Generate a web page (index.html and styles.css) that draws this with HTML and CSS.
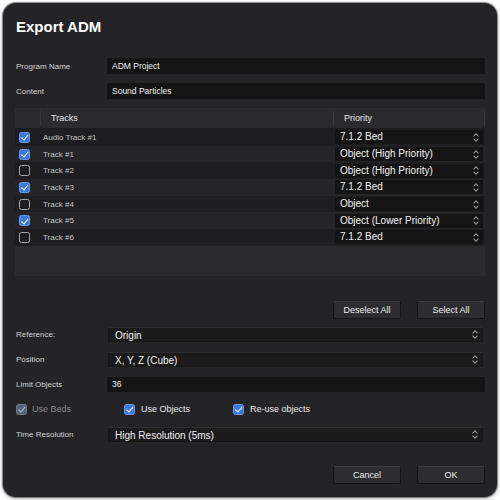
FILE: index.html
```html
<!DOCTYPE html>
<html lang="en">
<head>
<meta charset="UTF-8" />
<meta name="viewport" content="width=device-width, initial-scale=1" />
<title>Export ADM</title>
<link rel="stylesheet" href="styles.css">
</head>
<body>
<div class="dialog">
  <h1>Export ADM</h1>

  <div class="form top">
    <label>Program Name</label>
    <div class="field">ADM Project</div>
    <label>Content</label>
    <div class="field">Sound Particles</div>
  </div>

  <div class="tracks">
    <div class="thead">
      <div class="col-check"></div>
      <div class="col-name">Tracks</div>
      <div class="col-prio">Priority</div>
    </div>
    <div class="row">
      <div class="col-check"><span class="box on"></span></div>
      <div class="col-name">Audio Track #1</div>
      <div class="col-prio"><div class="select small">7.1.2 Bed<span class="arrows"></span></div></div>
    </div>
    <div class="row">
      <div class="col-check"><span class="box on"></span></div>
      <div class="col-name">Track #1</div>
      <div class="col-prio"><div class="select small">Object (High Priority)<span class="arrows"></span></div></div>
    </div>
    <div class="row">
      <div class="col-check"><span class="box"></span></div>
      <div class="col-name">Track #2</div>
      <div class="col-prio"><div class="select small">Object (High Priority)<span class="arrows"></span></div></div>
    </div>
    <div class="row">
      <div class="col-check"><span class="box on"></span></div>
      <div class="col-name">Track #3</div>
      <div class="col-prio"><div class="select small">7.1.2 Bed<span class="arrows"></span></div></div>
    </div>
    <div class="row">
      <div class="col-check"><span class="box"></span></div>
      <div class="col-name">Track #4</div>
      <div class="col-prio"><div class="select small">Object<span class="arrows"></span></div></div>
    </div>
    <div class="row">
      <div class="col-check"><span class="box on"></span></div>
      <div class="col-name">Track #5</div>
      <div class="col-prio"><div class="select small">Object (Lower Priority)<span class="arrows"></span></div></div>
    </div>
    <div class="row">
      <div class="col-check"><span class="box"></span></div>
      <div class="col-name">Track #6</div>
      <div class="col-prio"><div class="select small">7.1.2 Bed<span class="arrows"></span></div></div>
    </div>
    <div class="empty"></div>
  </div>

  <div class="buttons select-btns">
    <button>Deselect All</button>
    <button>Select All</button>
  </div>

  <div class="form bottom">
    <label>Reference:</label>
    <div class="select">Origin<span class="arrows"></span></div>
    <label>Position</label>
    <div class="select">X, Y, Z (Cube)<span class="arrows"></span></div>
    <label>Limit Objects</label>
    <div class="field">36</div>
    <div class="checks">
      <div class="check disabled"><span class="box on"></span>Use Beds</div>
      <div class="check"><span class="box on"></span>Use Objects</div>
      <div class="check"><span class="box on"></span>Re-use objects</div>
    </div>
    <label>Time Resolution</label>
    <div class="select">High Resolution (5ms)<span class="arrows"></span></div>
  </div>

  <div class="buttons footer">
    <button>Cancel</button>
    <button>OK</button>
  </div>
</div>
</body>
</html>
```

FILE: styles.css
```css
:root {
  --dialog-bg: #242426;
  --field-bg: #141414;
  --header-bg: #2b2b2e;
  --line: #3a3a3d;
  --text: #ececec;
  --label: #d2d2d2;
  --blue: #3a78de;
}
* {
  box-sizing: border-box;
}
body {
  margin: 0;
  background: #fff;
  font-family: "Liberation Sans", Arial, sans-serif;
  color: var(--text);
}
.dialog {
  margin: 3px;
  width: 494px;
  height: 494px;
  padding: 15px 12px 0;
  background: var(--dialog-bg);
  border-radius: 13px;
  box-shadow: 0 0 0 1px rgba(0, 0, 0, 0.35), 0 1px 4px rgba(0, 0, 0, 0.45);
  display: flex;
  flex-direction: column;
}
h1 {
  margin: 0 0 0 1px;
  font-size: 15px;
  line-height: 18px;
  font-weight: bold;
  color: #fff;
}

/* label + control grid */
.form {
  display: grid;
  grid-template-columns: 92px 1fr;
  align-items: center;
}
.form.top {
  margin-top: 22px;
  row-gap: 9px;
}
.form.bottom {
  margin-top: 8px;
  row-gap: 10px;
}
.form label {
  padding-left: 1px;
  font-size: 8px;
  color: var(--label);
}
.field {
  height: 16px;
  line-height: 16px;
  padding-left: 5px;
  background: var(--field-bg);
  font-size: 8.5px;
  color: #f0f0f0;
}
.form.bottom .field {
  height: 15px;
  line-height: 15px;
}
.select {
  position: relative;
  height: 15px;
  line-height: 15px;
  margin: 0 2px 0 1px;
  padding-left: 6px;
  background: #1b1b1c;
  border: 1px solid #161616;
  border-top-color: #2e2e30;
  font-size: 10px;
  color: #f2f2f2;
}
.select.small {
  height: 14px;
  line-height: 13px;
  margin: 0;
  padding-left: 5px;
  background: #141414;
  border: none;
}
.arrows {
  position: absolute;
  right: 5px;
  top: 50%;
  width: 5px;
  height: 9px;
  margin-top: -4.5px;
}
.arrows::before,
.arrows::after {
  content: "";
  position: absolute;
  left: 1px;
  width: 3px;
  height: 3px;
  border-left: 1px solid #9a9a9a;
  border-top: 1px solid #9a9a9a;
}
.arrows::before {
  top: 1px;
  transform: rotate(45deg);
}
.arrows::after {
  bottom: 1px;
  transform: rotate(-135deg);
}

/* tracks table */
.tracks {
  margin-top: 9px;
  background: var(--header-bg);
}
.thead,
.row {
  display: grid;
  grid-template-columns: 25px 1fr 152px;
  align-items: center;
}
.thead {
  height: 21px;
  font-size: 9px;
  color: #e6e6e6;
  border-bottom: 1px solid #1c1c1e;
}
.thead > div {
  height: 15px;
  line-height: 15px;
}
.thead .col-name {
  border-left: 1px solid var(--line);
  padding-left: 10px;
}
.thead .col-prio {
  border-left: 1px solid var(--line);
  border-right: 1px solid var(--line);
  padding-left: 10px;
}
.row {
  height: 16.7px;
  background: #1e1e20;
}
.row:nth-child(odd) {
  background: #252527;
}
.row .col-name {
  padding-left: 3px;
  font-size: 8px;
  color: #c4c4c4;
}
.row .col-prio {
  padding: 0 2px;
}
.col-check {
  display: flex;
  align-items: center;
  padding-left: 4px;
}
.empty {
  height: 30px;
}

/* checkbox */
.box {
  position: relative;
  display: inline-block;
  flex: none;
  width: 11px;
  height: 11px;
  border-radius: 2.5px;
  border: 1px solid #a8a8a8;
  background: #1d1d1f;
}
.box.on {
  background: var(--blue);
  border-color: #6c9ae6;
}
.box.on::after {
  content: "";
  position: absolute;
  left: 3px;
  top: 0.5px;
  width: 2.5px;
  height: 5.5px;
  border-right: 1.4px solid #fff;
  border-bottom: 1.4px solid #fff;
  transform: rotate(40deg);
}
.checks {
  grid-column: 1 / 3;
  display: flex;
  align-items: center;
  height: 15px;
  padding-left: 1px;
}
.check {
  display: flex;
  align-items: center;
  gap: 6px;
  font-size: 9px;
  color: #ececec;
}
.check:nth-child(1) {
  width: 108px;
  gap: 5px;
}
.check:nth-child(2) {
  width: 109px;
}
.check.disabled {
  color: #8a8a8c;
}
.check.disabled .box {
  background: #53637a;
  border-color: #6c7890;
}
.check.disabled .box::after {
  border-color: #b8bfca;
}

/* buttons */
.buttons {
  display: flex;
  justify-content: flex-end;
  gap: 16px;
}
.select-btns {
  margin-top: 25px;
}
.footer {
  margin-top: 24px;
}
.buttons button {
  width: 68px;
  height: 18px;
  padding: 0;
  background: #2d2d2f;
  border: 1px solid #151515;
  border-top-color: #3c3c3e;
  border-radius: 2px;
  font-family: inherit;
  font-size: 9px;
  color: #ececec;
}
```
